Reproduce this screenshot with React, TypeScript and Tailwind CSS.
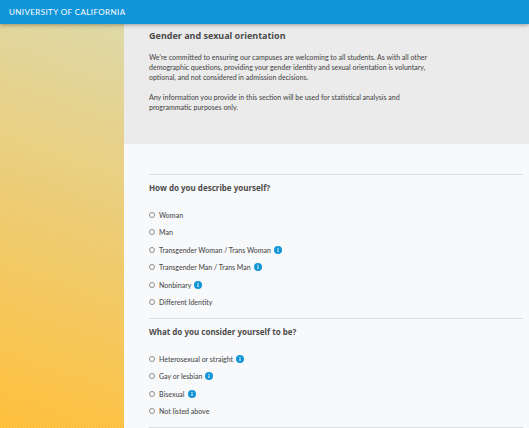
type Option = {
  label: string;
  info?: boolean;
};

type Question = {
  name: string;
  title: string;
  options: Option[];
};

const QUESTIONS: Question[] = [
  {
    name: "gender",
    title: "How do you describe yourself?",
    options: [
      { label: "Woman" },
      { label: "Man" },
      { label: "Transgender Woman / Trans Woman", info: true },
      { label: "Transgender Man / Trans Man", info: true },
      { label: "Nonbinary", info: true },
      { label: "Different Identity" },
    ],
  },
  {
    name: "orientation",
    title: "What do you consider yourself to be?",
    options: [
      { label: "Heterosexual or straight", info: true },
      { label: "Gay or lesbian", info: true },
      { label: "Bisexual", info: true },
      { label: "Not listed above" },
    ],
  },
];

function InfoButton({ label }: { label: string }) {
  return (
    <button type="button" aria-label={`About ${label}`} className="ml-[3px] shrink-0">
      <svg viewBox="0 0 16 16" className="size-2" aria-hidden>
        <circle cx="8" cy="8" r="8" fill="#1295d8" />
        <circle cx="8" cy="4.600" r="1.300" fill="#fff" />
        <path d="M7 7h2v5H7z" fill="#fff" />
      </svg>
    </button>
  );
}

function QuestionGroup({ name, title, options }: Question) {
  return (
    <section className="border-t border-[#dbdddf] py-[7px]" aria-labelledby={`${name}-title`}>
      <h2 id={`${name}-title`} className="mb-3 font-['Noto_Sans',sans-serif] text-[8px] leading-3 font-bold">
        {title}
      </h2>
      <ul>
        {options.map((option, i) => {
          const id = `${name}-${i}`;
          return (
            <li key={id} className="flex h-[17px] items-center even:h-[18px]">
              <input
                id={id}
                type="radio"
                name={name}
                className="size-[6px] shrink-0 appearance-none rounded-full border border-[#8a8a8a] bg-white checked:bg-[#1295d8]"
              />
              <label htmlFor={id} className="pl-1 text-[7px] leading-[10px] font-medium">
                {option.label}
              </label>
              {option.info && <InfoButton label={option.label} />}
            </li>
          );
        })}
      </ul>
    </section>
  );
}

export default function App() {
  return (
    <div className="flex min-h-screen flex-col bg-[#f8f9fb] font-['Lato',sans-serif] text-[#4c4c4c]">
      <header className="z-10 flex h-6 items-center bg-[#1295d8] px-[9px] shadow-[0_1px_4px_rgba(0,0,0,0.35)]">
        <a href="#" className="text-[8px] leading-3 tracking-wider text-white">
          UNIVERSITY OF CALIFORNIA
        </a>
      </header>

      <div className="flex flex-1">
        <aside className="w-[124px] shrink-0 bg-[linear-gradient(200deg,#dad49e,#ffb927)]">
          {/* fine diagonal hatch over the gradient */}
          <div className="h-full bg-[linear-gradient(135deg,rgba(255,255,255,0.15)_25%,transparent_25%_50%,rgba(255,255,255,0.15)_50%_75%,transparent_75%)] bg-size-[3px_3px]" />
        </aside>

        <main className="min-w-0 flex-1">
          <div className="bg-[#ebebeb] pt-[6px] pr-[6px] pb-8 pl-[25px]">
            <h1 className="mb-[10px] font-['Noto_Sans',sans-serif] text-[9px] leading-3 font-bold">
              Gender and sexual orientation
            </h1>
            <div className="flex max-w-[280px] flex-col gap-[10px] text-[7px] leading-[10px] font-medium">
              <p>
                We're committed to ensuring our campuses are welcoming to all students. As with all other
                demographic questions, providing your gender identity and sexual orientation is voluntary,
                optional, and not considered in admission decisions.
              </p>
              <p>
                Any information you provide in this section will be used for statistical analysis and
                programmatic purposes only.
              </p>
            </div>
          </div>

          <form className="pt-[30px] pr-[6px] pl-[25px]">
            {QUESTIONS.map((question) => (
              <QuestionGroup key={question.name} {...question} />
            ))}
            <hr className="border-[#dbdddf]" />
          </form>
        </main>
      </div>
    </div>
  );
}
